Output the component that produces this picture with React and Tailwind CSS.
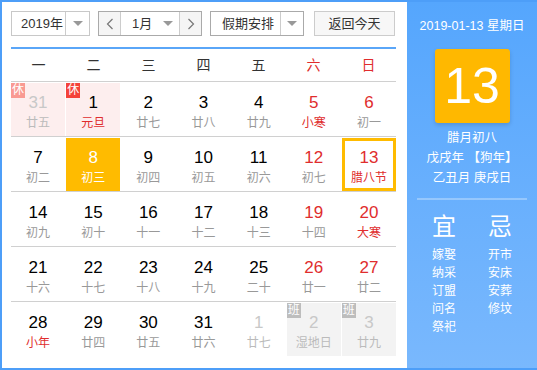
import React from 'react';

const weekNames = ['一', '二', '三', '四', '五', '六', '日'];

// out = other month, tag = 休/班 badge
const weeks = [
    [
        { d: 31, l: '廿五', out: true, tag: '休', pink: true },
        { d: 1, l: '元旦', red: true, tag: '休', pink: true },
        { d: 2, l: '廿七' },
        { d: 3, l: '廿八' },
        { d: 4, l: '廿九' },
        { d: 5, l: '小寒', wk: true, red: true },
        { d: 6, l: '初一', wk: true },
    ],
    [
        { d: 7, l: '初二' },
        { d: 8, l: '初三', selected: true },
        { d: 9, l: '初四' },
        { d: 10, l: '初五' },
        { d: 11, l: '初六' },
        { d: 12, l: '初七', wk: true },
        { d: 13, l: '腊八节', wk: true, red: true, today: true },
    ],
    [
        { d: 14, l: '初九' },
        { d: 15, l: '初十' },
        { d: 16, l: '十一' },
        { d: 17, l: '十二' },
        { d: 18, l: '十三' },
        { d: 19, l: '十四', wk: true },
        { d: 20, l: '大寒', wk: true, red: true },
    ],
    [
        { d: 21, l: '十六' },
        { d: 22, l: '十七' },
        { d: 23, l: '十八' },
        { d: 24, l: '十九' },
        { d: 25, l: '二十' },
        { d: 26, l: '廿一', wk: true },
        { d: 27, l: '廿二', wk: true },
    ],
    [
        { d: 28, l: '小年', red: true },
        { d: 29, l: '廿四' },
        { d: 30, l: '廿五' },
        { d: 31, l: '廿六' },
        { d: 1, l: '廿七', out: true },
        { d: 2, l: '湿地日', out: true, tag: '班', grey: true },
        { d: 3, l: '廿九', out: true, tag: '班', grey: true },
    ],
];

const Caret = () => (
    <span className="w-0 h-0 border-l-[5px] border-r-[5px] border-t-[5px] border-l-transparent border-r-transparent border-t-[#999]" />
);

const Chevron = ({ right }) => (
    <svg width="8" height="12" viewBox="0 0 8 12" fill="none" stroke="#777" strokeWidth="1.2">
        {right ? <path d="M1.5 1 L6.5 6 L1.5 11" /> : <path d="M6.5 1 L1.5 6 L6.5 11" />}
    </svg>
);

function Cell({ c }) {
    let bg = 'bg-white';
    if (c.pink) bg = 'bg-[#fdeeee]';
    if (c.grey) bg = 'bg-[#f3f3f3]';
    if (c.selected) bg = 'bg-[#ffbb00]';

    let numColor = c.wk ? 'text-[#e02d2d]' : 'text-black';
    let lunarColor = c.red ? 'text-[#e02d2d]' : 'text-[#999]';
    if (c.out) {
        numColor = 'text-[#c8c8c8]';
        lunarColor = 'text-[#bbb]';
    }
    if (c.selected) {
        numColor = 'text-white';
        lunarColor = 'text-white';
    }

    const tagBg = c.tag === '休' ? (c.out ? 'bg-[#f99a92]' : 'bg-[#f4433a]') : 'bg-[#bdbdbd]';

    return (
        <div className={`relative h-[53px] flex flex-col items-center ${bg} ${c.today ? 'border-[3px] border-[#ffbb00]' : ''}`}>
            {c.tag && (
                <span className={`absolute left-0 top-0 w-[14px] h-[15px] leading-[15px] text-[12px] text-white text-center ${tagBg}`}>
                    {c.tag}
                </span>
            )}
            <span className={`${c.today ? 'mt-[7px]' : 'mt-[10px]'} text-[17px] leading-[20px] ${numColor}`}>{c.d}</span>
            <span className={`text-[12px] leading-[16px] mt-[2px] ${lunarColor}`}>{c.l}</span>
        </div>
    );
}

export default function App() {
    return (
        <div
            className="w-[537px] h-[370px] flex border-2 border-r-0 border-[#4d9ef8] bg-white overflow-hidden"
            style={{ fontFamily: '"Liberation Sans", "Noto Sans CJK SC", sans-serif' }}
        >
            <div className="w-[405px] px-[9px] pt-[9px]">
                {/* toolbar */}
                <div className="flex items-center h-[25px] text-[13px] text-[#333]">
                    <div className="flex w-[79px] h-[25px] border border-[#c8c8c8]">
                        <span className="flex-1 pl-[9px] leading-[23px]">2019年</span>
                        <span className="w-[24px] border-l border-[#ccc] flex items-center justify-center"><Caret /></span>
                    </div>
                    <div className="flex ml-[8px] w-[104px] h-[25px] border border-[#aaa]">
                        <span className="w-[22px] bg-[#f5f5f5] border-r border-[#ccc] flex items-center justify-center"><Chevron /></span>
                        <span className="flex-1 flex items-center justify-between pl-[11px] pr-[6px]">
                            <span>1月</span>
                            <Caret />
                        </span>
                        <span className="w-[22px] bg-[#f5f5f5] border-l border-[#ccc] flex items-center justify-center"><Chevron right /></span>
                    </div>
                    <div className="flex ml-[8px] w-[94px] h-[25px] border border-[#aaa]">
                        <span className="flex-1 pl-[11px] leading-[23px]">假期安排</span>
                        <span className="w-[23px] border-l border-[#ccc] flex items-center justify-center"><Caret /></span>
                    </div>
                    <div className="ml-[10px] w-[81px] h-[25px] border border-[#ccc] bg-[#f7f7f7] leading-[23px] text-center">返回今天</div>
                </div>

                <div className="mt-[11px] w-[385px] h-[2px] bg-[#5aa6f8]" />

                {/* weekday header */}
                <div className="grid grid-cols-7 w-[385px] h-[32px] items-center text-[14px]">
                    {weekNames.map((w, i) => (
                        <span key={w} className={`text-center ${i >= 5 ? 'text-[#e02d2d]' : 'text-[#333]'}`}>{w}</span>
                    ))}
                </div>

                {/* days */}
                <div className="w-[385px]">
                    {weeks.map((row, ri) => (
                        <div key={ri} className="border-t border-[#d0d0d0] pt-px grid grid-cols-7 gap-x-px">
                            {row.map((c, ci) => <Cell key={ci} c={c} />)}
                        </div>
                    ))}
                </div>
            </div>

            {/* side panel */}
            <div className="flex-1 flex flex-col items-center bg-gradient-to-b from-[#55a6fd] to-[#79b8fd] text-white">
                <div className="mt-[15px] text-[12.5px] leading-[18px]">2019-01-13 星期日</div>
                <div className="mt-[14px] w-[75px] h-[74px] rounded-[3px] bg-[#ffb800] shadow-[0_2px_4px_rgba(0,0,0,0.15)] flex items-center justify-center text-[50px] leading-none">
                    13
                </div>
                <div className="mt-[5px] text-[12.5px] leading-[20px] text-center">
                    <div>腊月初八</div>
                    <div>戊戌年 【狗年】</div>
                    <div>乙丑月 庚戌日</div>
                </div>
                <div className="mt-[10px] w-[110px] h-[2px] bg-white/30" />
                <div className="flex gap-[31px] mt-[12px]">
                    <div className="flex flex-col items-center w-[25px]">
                        <span className="text-[24px] leading-[30px]">宜</span>
                        <div className="mt-[4px] text-[12px] leading-[18px] flex flex-col">
                            <span>嫁娶</span>
                            <span>纳采</span>
                            <span>订盟</span>
                            <span>问名</span>
                            <span>祭祀</span>
                        </div>
                    </div>
                    <div className="flex flex-col items-center w-[25px]">
                        <span className="text-[24px] leading-[30px]">忌</span>
                        <div className="mt-[4px] text-[12px] leading-[18px] flex flex-col">
                            <span>开市</span>
                            <span>安床</span>
                            <span>安葬</span>
                            <span>修坟</span>
                        </div>
                    </div>
                </div>
            </div>
        </div>
    );
}
